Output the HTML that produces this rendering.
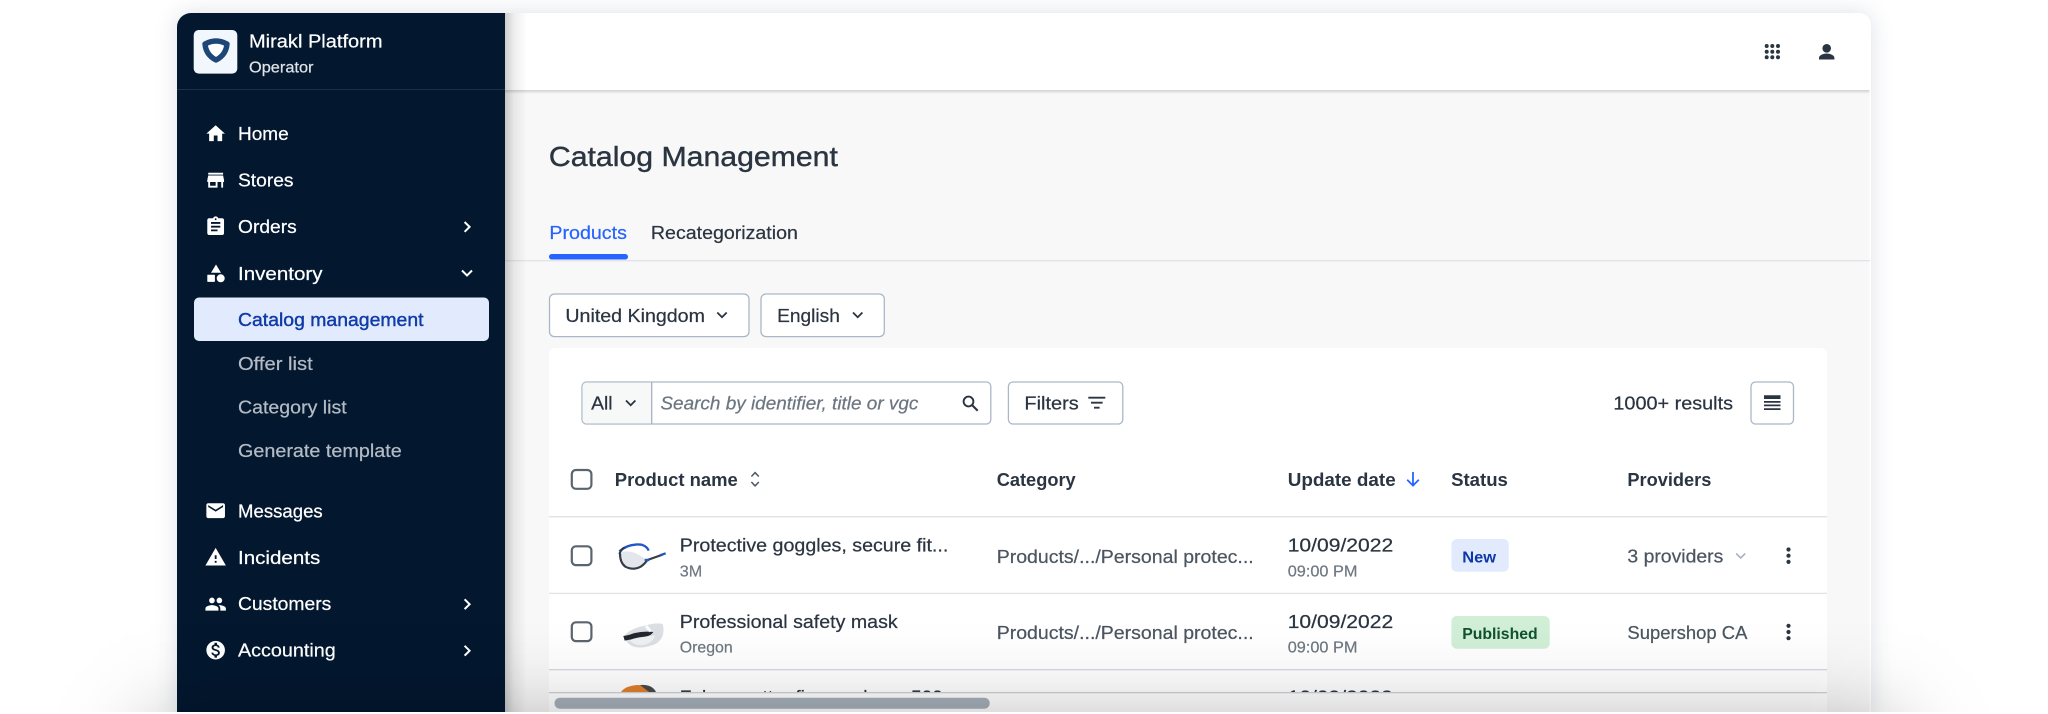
<!DOCTYPE html>
<html lang="en">
<head>
<meta charset="utf-8">
<title>Catalog Management</title>
<style>
html,body{margin:0;padding:0;background:#fff;width:2048px;height:714px;overflow:hidden}
#clip{position:absolute;left:0;top:0;width:2048px;height:712px;overflow:hidden;background:#fff}
#shadow{position:absolute;left:177px;top:13px;width:1694px;height:699px;border-radius:14px 12px 0 0;box-shadow:0 0 22px rgba(60,70,115,.17)}
svg{position:absolute;left:0;top:0;display:block}
text{font-family:"Liberation Sans",sans-serif;font-size:18px;color:#2b3541;fill:currentColor;stroke:currentColor;stroke-width:.22}
text:not(.w):not(.s):not(.m){transform:translateX(-.6px)}
.w{color:#fff}
.s{color:#b4bbc5}
.b{font-weight:700;stroke-width:0}
.g{font-size:15.5px;color:#6f7882}
.t{font-size:28px;stroke-width:.4}
</style>
</head>
<body>
<div id="clip">
<div id="shadow"></div>
<svg width="2048" height="712" viewBox="0 0 2048 712" xmlns="http://www.w3.org/2000/svg">
<defs>
<linearGradient id="sb" x1="0" x2="1" y1="0" y2="0"><stop offset="0" stop-color="#000" stop-opacity=".2"/><stop offset=".4" stop-color="#000" stop-opacity=".07"/><stop offset="1" stop-color="#000" stop-opacity="0"/></linearGradient>
<linearGradient id="hd" x1="0" x2="0" y1="0" y2="1"><stop offset="0" stop-color="#000" stop-opacity=".16"/><stop offset="1" stop-color="#000" stop-opacity="0"/></linearGradient>
<clipPath id="rc"><rect x="549" y="670" width="1278" height="22"/></clipPath>
<linearGradient id="fv" gradientUnits="userSpaceOnUse" x1="0" y1="620" x2="0" y2="712">
<stop offset="0" stop-color="#000" stop-opacity="0"/>
<stop offset=".217" stop-color="#000" stop-opacity=".008"/>
<stop offset=".435" stop-color="#000" stop-opacity=".022"/>
<stop offset=".652" stop-color="#000" stop-opacity=".05"/>
<stop offset=".87" stop-color="#000" stop-opacity=".093"/>
<stop offset="1" stop-color="#000" stop-opacity=".128"/>
</linearGradient>
<linearGradient id="fh" gradientUnits="userSpaceOnUse" x1="50" y1="0" x2="1998" y2="0">
<stop offset="0" stop-color="#fff" stop-opacity="0"/>
<stop offset=".0205" stop-color="#fff" stop-opacity=".067"/>
<stop offset=".0359" stop-color="#fff" stop-opacity=".227"/>
<stop offset=".0513" stop-color="#fff" stop-opacity=".5"/>
<stop offset=".0667" stop-color="#fff" stop-opacity=".773"/>
<stop offset=".0821" stop-color="#fff" stop-opacity=".933"/>
<stop offset=".1" stop-color="#fff" stop-opacity="1"/>
<stop offset=".9" stop-color="#fff" stop-opacity="1"/>
<stop offset=".9179" stop-color="#fff" stop-opacity=".933"/>
<stop offset=".9333" stop-color="#fff" stop-opacity=".773"/>
<stop offset=".9487" stop-color="#fff" stop-opacity=".5"/>
<stop offset=".9641" stop-color="#fff" stop-opacity=".227"/>
<stop offset=".9795" stop-color="#fff" stop-opacity=".067"/>
<stop offset="1" stop-color="#fff" stop-opacity="0"/>
</linearGradient>
<mask id="fm" maskUnits="userSpaceOnUse" x="50" y="620" width="1948" height="92"><rect x="50" y="620" width="1948" height="92" fill="url(#fh)"/></mask>
</defs>

<!-- window -->
<path d="M505 13H1859a12 12 0 0 1 12 12V712H505Z" fill="#f8f8f8"/>
<path d="M505 13H1859a12 12 0 0 1 12 12V90H505Z" fill="#fff"/>
<rect x="505" y="90" width="1365" height="4" fill="url(#hd)"/>
<rect x="1869.5" y="25" width="1.5" height="687" fill="#fff"/>

<!-- header icons -->
<g fill="#2b3541">
<circle cx="1766.7" cy="46" r="2"/><circle cx="1772.3" cy="46" r="2"/><circle cx="1778" cy="46" r="2"/>
<circle cx="1766.7" cy="51.7" r="2"/><circle cx="1772.3" cy="51.7" r="2"/><circle cx="1778" cy="51.7" r="2"/>
<circle cx="1766.7" cy="57.3" r="2"/><circle cx="1772.3" cy="57.3" r="2"/><circle cx="1778" cy="57.3" r="2"/>
<circle cx="1826.7" cy="48.3" r="4.3"/>
<path d="M1819 59.5v-1.7c0-2.8 4.8-4.3 7.7-4.3s7.7 1.5 7.7 4.3v1.7z"/>
</g>

<!-- title & tabs -->
<text class="t" x="549.5" y="166" textLength="289" lengthAdjust="spacingAndGlyphs">Catalog Management</text>
<text x="550" y="239" style="color:#2764ff" textLength="77.5" lengthAdjust="spacingAndGlyphs">Products</text>
<text x="651.5" y="239" textLength="147" lengthAdjust="spacingAndGlyphs">Recategorization</text>
<rect x="505" y="260" width="1365" height="1.4" fill="#e1e5ea"/>
<rect x="549" y="254" width="79" height="5.5" rx="2.7" fill="#2764ff"/>

<!-- selectors -->
<rect x="549.5" y="294" width="199.5" height="42.6" rx="5" fill="#fff" stroke="#aab7c7" stroke-width="1.3"/>
<text x="566" y="322" textLength="139.5" lengthAdjust="spacingAndGlyphs">United Kingdom</text>
<path d="M717.3 312.5l4.7 4.7 4.7-4.7" fill="none" stroke="#2b3541" stroke-width="1.8"/>
<rect x="761" y="294" width="123.3" height="42.6" rx="5" fill="#fff" stroke="#aab7c7" stroke-width="1.3"/>
<text x="777.7" y="322" textLength="62.8" lengthAdjust="spacingAndGlyphs">English</text>
<path d="M853 312.5l4.7 4.7 4.7-4.7" fill="none" stroke="#2b3541" stroke-width="1.8"/>

<!-- card -->
<path d="M555 348H1821a6 6 0 0 1 6 6V712H549V354a6 6 0 0 1 6-6Z" fill="#fff"/>

<!-- toolbar -->
<rect x="582" y="382" width="408.8" height="42" rx="4.5" fill="#fff" stroke="#aab7c7" stroke-width="1.3"/>
<path d="M586.5 382.6H651.7V423.4H586.5a4 4 0 0 1-4-4V386.6a4 4 0 0 1 4-4Z" fill="#f7f8f8"/>
<rect x="651" y="382" width="1.4" height="42" fill="#aab7c7"/>
<text x="591.7" y="409.3" textLength="21.5" lengthAdjust="spacingAndGlyphs">All</text>
<path d="M626 400.5l4.7 4.7 4.7-4.7" fill="none" stroke="#2b3541" stroke-width="1.8"/>
<text x="661" y="409.3" style="color:#6c7680;font-style:italic" textLength="258" lengthAdjust="spacingAndGlyphs">Search by identifier, title or vgc</text>
<circle cx="968.5" cy="401.5" r="4.9" fill="none" stroke="#2b3541" stroke-width="1.9"/>
<path d="M972 405l5.7 5.7" stroke="#2b3541" stroke-width="2.1" fill="none"/>
<rect x="1008.4" y="382" width="114.4" height="42" rx="4.5" fill="#fff" stroke="#aab7c7" stroke-width="1.3"/>
<text x="1025" y="409.3" textLength="54.3" lengthAdjust="spacingAndGlyphs">Filters</text>
<path d="M1088.3 397.7h17M1091 402.7h11.6M1094 407.7h5.6" stroke="#2b3541" stroke-width="1.8" fill="none"/>
<text x="1614" y="409.3" textLength="119.6" lengthAdjust="spacingAndGlyphs">1000+ results</text>
<rect x="1751" y="382" width="42.5" height="42" rx="4.5" fill="#fff" stroke="#aab7c7" stroke-width="1.3"/>
<path d="M1764 395.3h16.5v3.7H1764zM1764 401h16.5v1.8H1764zM1764 404.5h16.5v1.8H1764zM1764 408.2h16.5v1.8H1764z" fill="#2b3541"/>

<!-- table header -->
<rect x="571.8" y="470" width="19.6" height="18.8" rx="4" fill="#fff" stroke="#5b6570" stroke-width="2.2"/>
<text class="b" x="615.4" y="486" textLength="123" lengthAdjust="spacingAndGlyphs">Product name</text>
<path d="M751.4 476.5l3.7-3.9 3.7 3.9M751.4 482l3.7 3.9 3.7-3.9" fill="none" stroke="#4a5560" stroke-width="1.5"/>
<text class="b" x="997.3" y="486" textLength="79" lengthAdjust="spacingAndGlyphs">Category</text>
<text class="b" x="1288.3" y="486" textLength="108" lengthAdjust="spacingAndGlyphs">Update date</text>
<path d="M1413 472v13.4M1407.2 479.8l5.8 5.8 5.8-5.8" fill="none" stroke="#2764ff" stroke-width="1.8"/>
<text class="b" x="1451.7" y="486" textLength="56.8" lengthAdjust="spacingAndGlyphs">Status</text>
<text class="b" x="1628" y="486" textLength="84" lengthAdjust="spacingAndGlyphs">Providers</text>
<rect x="549" y="516" width="1278" height="1.4" fill="#dfe3e8"/>

<!-- row 1 -->
<rect x="571.8" y="546.3" width="19.6" height="18.8" rx="4" fill="#fff" stroke="#5b6570" stroke-width="2.2"/>
<g transform="translate(600 530) scale(.3333)" fill="none">
<path d="M62 66 Q100 58 136 88 Q128 108 104 114 Q78 114 68 96Z" fill="#e3e6ea"/>
<path d="M60 70 Q60 98 76 110 Q100 122 122 110 Q134 102 142 90 L188 74" stroke="#353c45" stroke-width="6.5"/>
<path d="M180 76 L197 70" stroke="#2055c0" stroke-width="7"/>
<path d="M58 64 Q85 40 125 44 Q142 50 146 62" stroke="#1f57c4" stroke-width="7"/>
<path d="M74 52 Q62 60 58 72" stroke="#2f3640" stroke-width="6"/>
<path d="M134 90 L148 90" stroke="#1f57c4" stroke-width="7"/>
</g>
<text x="680.4" y="551.3" textLength="268.5" lengthAdjust="spacingAndGlyphs">Protective goggles, secure fit...</text>
<text class="g" x="680.4" y="576.3" textLength="22.5" lengthAdjust="spacingAndGlyphs">3M</text>
<text x="997.3" y="563" style="color:#4c5661" textLength="257" lengthAdjust="spacingAndGlyphs">Products/.../Personal protec...</text>
<text x="1288.3" y="551.7" textLength="105.5" lengthAdjust="spacingAndGlyphs">10/09/2022</text>
<text class="g" x="1288.3" y="576.7" textLength="69.8" lengthAdjust="spacingAndGlyphs">09:00 PM</text>
<rect x="1451.4" y="539" width="57.4" height="32.7" rx="5.5" fill="#e2ebfd"/>
<text class="b" x="1462.8" y="562.7" style="font-size:15.5px;color:#0d39a8" textLength="33.8" lengthAdjust="spacingAndGlyphs">New</text>
<text x="1628" y="562.3" style="color:#4c5661" textLength="95.9" lengthAdjust="spacingAndGlyphs">3 providers</text>
<path d="M1736.2 553.5l4.5 4.5 4.5-4.5" fill="none" stroke="#aab3bd" stroke-width="1.6"/>
<g fill="#2b3541"><circle cx="1788.5" cy="549.5" r="2.1"/><circle cx="1788.5" cy="555.7" r="2.1"/><circle cx="1788.5" cy="561.9" r="2.1"/></g>
<rect x="549" y="592.7" width="1278" height="1.4" fill="#e1e5ea"/>

<!-- row 2 -->
<rect x="571.8" y="622.3" width="19.6" height="18.8" rx="4" fill="#fff" stroke="#5b6570" stroke-width="2.2"/>
<g transform="translate(600 530) scale(.3333)">
<path d="M72 320 Q84 298 130 288 Q170 276 188 282 Q198 320 170 340 Q132 358 100 350 Q80 342 72 320Z" fill="#dcdfe3"/>
<path d="M88 330 Q120 322 165 316 Q160 336 135 344 Q105 350 88 330Z" fill="#eff0f2"/>
<path d="M70 318 Q85 316 95 312 Q125 302 160 306 Q152 318 135 320 Q110 322 94 328 L74 332Z" fill="#22282e"/>
<path d="M138 288l14 16" stroke="#fdfdfd" stroke-width="9"/>
</g>
<text x="680.4" y="628" textLength="217.9" lengthAdjust="spacingAndGlyphs">Professional safety mask</text>
<text class="g" x="680.4" y="652.7" textLength="52.9" lengthAdjust="spacingAndGlyphs">Oregon</text>
<text x="997.3" y="639" style="color:#4c5661" textLength="257" lengthAdjust="spacingAndGlyphs">Products/.../Personal protec...</text>
<text x="1288.3" y="628" textLength="105.5" lengthAdjust="spacingAndGlyphs">10/09/2022</text>
<text class="g" x="1288.3" y="652.7" textLength="69.8" lengthAdjust="spacingAndGlyphs">09:00 PM</text>
<rect x="1451.4" y="616" width="98.3" height="32.7" rx="5.5" fill="#d0efd6"/>
<text class="b" x="1462.8" y="639" style="font-size:15.5px;color:#11512e" textLength="75.5" lengthAdjust="spacingAndGlyphs">Published</text>
<text x="1628" y="639" style="color:#4c5661" textLength="120" lengthAdjust="spacingAndGlyphs">Supershop CA</text>
<g fill="#2b3541"><circle cx="1788.5" cy="625.8" r="2.1"/><circle cx="1788.5" cy="632" r="2.1"/><circle cx="1788.5" cy="638.2" r="2.1"/></g>
<rect x="549" y="669" width="1278" height="1.4" fill="#d5dae0"/>

<!-- row 3 clipped -->
<path d="M621 692 Q625 686 637 685 Q648 685 653 692Z" fill="#e07f2c"/>
<path d="M640 685 Q652 684 656 692 L649 692 Z" fill="#4a4a4a"/>
<g clip-path="url(#rc)">
<text x="680.4" y="703.7" textLength="263" lengthAdjust="spacingAndGlyphs">Falcon cutter fire mask pro 500</text>
<text x="1288.3" y="703.7" textLength="105" lengthAdjust="spacingAndGlyphs">10/09/2022</text>
</g>

<!-- scrollbar -->
<rect x="549" y="692" width="1278" height="20" fill="#fff"/>
<rect x="549" y="692" width="1278" height="1.3" fill="#cfd3d8"/>
<rect x="554.5" y="697.7" width="435.2" height="11" rx="5.5" fill="#a6b0ba"/>

<!-- sidebar shadow & sidebar -->
<rect x="505" y="13" width="22" height="699" fill="url(#sb)"/>
<path d="M191 13H505V712H177V27a14 14 0 0 1 14-14Z" fill="#03172f"/>
<rect x="177" y="89" width="328" height="1" fill="#1d3047"/>

<!-- logo -->
<rect x="193.7" y="30" width="43.6" height="43.6" rx="5" fill="#f2f7fd"/>
<path d="M205 44 Q216 38 227 44 Q226 55 216 60 Q206 55 205 44Z" fill="#fff" stroke="#1d4778" stroke-width="5.4" stroke-linejoin="round"/>
<text class="w" x="249" y="47.5" textLength="133.5" lengthAdjust="spacingAndGlyphs">Mirakl Platform</text>
<text class="w" x="249" y="72.5" style="color:#dfe3e8;font-size:15.5px" textLength="64.5" lengthAdjust="spacingAndGlyphs">Operator</text>

<!-- nav icons -->
<g fill="#fff">
<path transform="translate(204.5 122.5) scale(.93)" d="M10 20v-6h4v6h5v-8h3L12 3 2 12h3v8z"/>
<path transform="translate(204.5 169) scale(.93)" d="M20 4H4v2h16V4zm1 10v-2l-1-5H4l-1 5v2h1v6h10v-6h4v6h2v-6h1zm-9 4H6v-4h6v4z"/>
<path transform="translate(204.5 215.5) scale(.93)" d="M19 3h-4.18C14.4 1.84 13.3 1 12 1c-1.3 0-2.4.84-2.82 2H5c-1.1 0-2 .9-2 2v14c0 1.1.9 2 2 2h14c1.1 0 2-.9 2-2V5c0-1.1-.9-2-2-2zm-7 0c.55 0 1 .45 1 1s-.45 1-1 1-1-.45-1-1 .45-1 1-1zm2 14H7v-2h7v2zm3-4H7v-2h10v2zm0-4H7V7h10v2z"/>
<path d="M216 264.5l5 8.3h-10z"/><rect x="207.3" y="274.7" width="7.6" height="7.2" rx=".6"/><circle cx="220.7" cy="278.3" r="4"/>
<path transform="translate(204.5 499.5) scale(.93)" d="M20 4H4c-1.1 0-1.99.9-1.99 2L2 18c0 1.1.9 2 2 2h16c1.1 0 2-.9 2-2V6c0-1.1-.9-2-2-2zm0 4l-8 5-8-5V6l8 5 8-5v2z"/>
<path transform="translate(204.5 546) scale(.93)" d="M1 21h22L12 2 1 21zm12-3h-2v-2h2v2zm0-4h-2v-4h2v4z"/>
<path transform="translate(204.5 593) scale(.93)" d="M16 11c1.66 0 2.99-1.34 2.99-3S17.66 5 16 5c-1.66 0-3 1.34-3 3s1.34 3 3 3zm-8 0c1.66 0 2.99-1.34 2.99-3S9.66 5 8 5C6.34 5 5 6.34 5 8s1.34 3 3 3zm0 2c-2.33 0-7 1.17-7 3.5V19h14v-2.5c0-2.33-4.67-3.5-7-3.5zm8 0c-.29 0-.62.02-.97.05 1.16.84 1.97 1.97 1.97 3.45V19h6v-2.5c0-2.33-4.67-3.5-7-3.5z"/>
<path transform="translate(204.5 639) scale(.93)" d="M12 2C6.48 2 2 6.48 2 12s4.48 10 10 10 10-4.48 10-10S17.52 2 12 2zm1.41 16.09V20h-2.67v-1.93c-1.71-.36-3.16-1.46-3.27-3.4h1.96c.1 1.05.82 1.87 2.65 1.87 1.96 0 2.4-.98 2.4-1.59 0-.83-.44-1.61-2.67-2.14-2.48-.6-4.18-1.62-4.18-3.67 0-1.72 1.39-2.84 3.11-3.21V4h2.67v1.95c1.86.45 2.79 1.86 2.85 3.39H14.3c-.05-1.11-.64-1.87-2.22-1.87-1.5 0-2.4.68-2.4 1.64 0 .84.65 1.39 2.67 1.91s4.18 1.39 4.18 3.91c-.01 1.83-1.38 2.83-3.12 3.16z"/>
</g>

<!-- nav text -->
<text class="w" x="238" y="140" textLength="50.7" lengthAdjust="spacingAndGlyphs">Home</text>
<text class="w" x="238" y="186.7" textLength="55.5" lengthAdjust="spacingAndGlyphs">Stores</text>
<text class="w" x="238" y="233" textLength="58.7" lengthAdjust="spacingAndGlyphs">Orders</text>
<text class="w" x="238" y="280" textLength="84.5" lengthAdjust="spacingAndGlyphs">Inventory</text>
<rect x="194" y="297.5" width="295" height="43.5" rx="5" fill="#e1ebfd"/>
<text class="m" x="238" y="326.2" style="color:#0f3aa8;stroke-width:.4" textLength="185.5" lengthAdjust="spacingAndGlyphs">Catalog management</text>
<text class="s" x="238" y="370" textLength="74.7" lengthAdjust="spacingAndGlyphs">Offer list</text>
<text class="s" x="238" y="413.5" textLength="108.7" lengthAdjust="spacingAndGlyphs">Category list</text>
<text class="s" x="238" y="457" textLength="163.7" lengthAdjust="spacingAndGlyphs">Generate template</text>
<text class="w" x="238" y="517.3" textLength="84.7" lengthAdjust="spacingAndGlyphs">Messages</text>
<text class="w" x="238" y="564" textLength="82.3" lengthAdjust="spacingAndGlyphs">Incidents</text>
<text class="w" x="238" y="610" textLength="93.3" lengthAdjust="spacingAndGlyphs">Customers</text>
<text class="w" x="238" y="656.7" textLength="97.7" lengthAdjust="spacingAndGlyphs">Accounting</text>

<!-- nav chevrons -->
<g fill="none" stroke="#fff" stroke-width="2">
<path d="M464.6 222l5 4.9-5 4.9"/>
<path d="M462 270.5l5 5 5-5"/>
<path d="M464.6 599.3l5 4.9-5 4.9"/>
<path d="M464.6 645.8l5 4.9-5 4.9"/>
</g>

<!-- bottom fade -->
<rect x="50" y="620" width="1948" height="92" fill="url(#fv)" mask="url(#fm)"/>
</svg>
</div>
</body>
</html>
